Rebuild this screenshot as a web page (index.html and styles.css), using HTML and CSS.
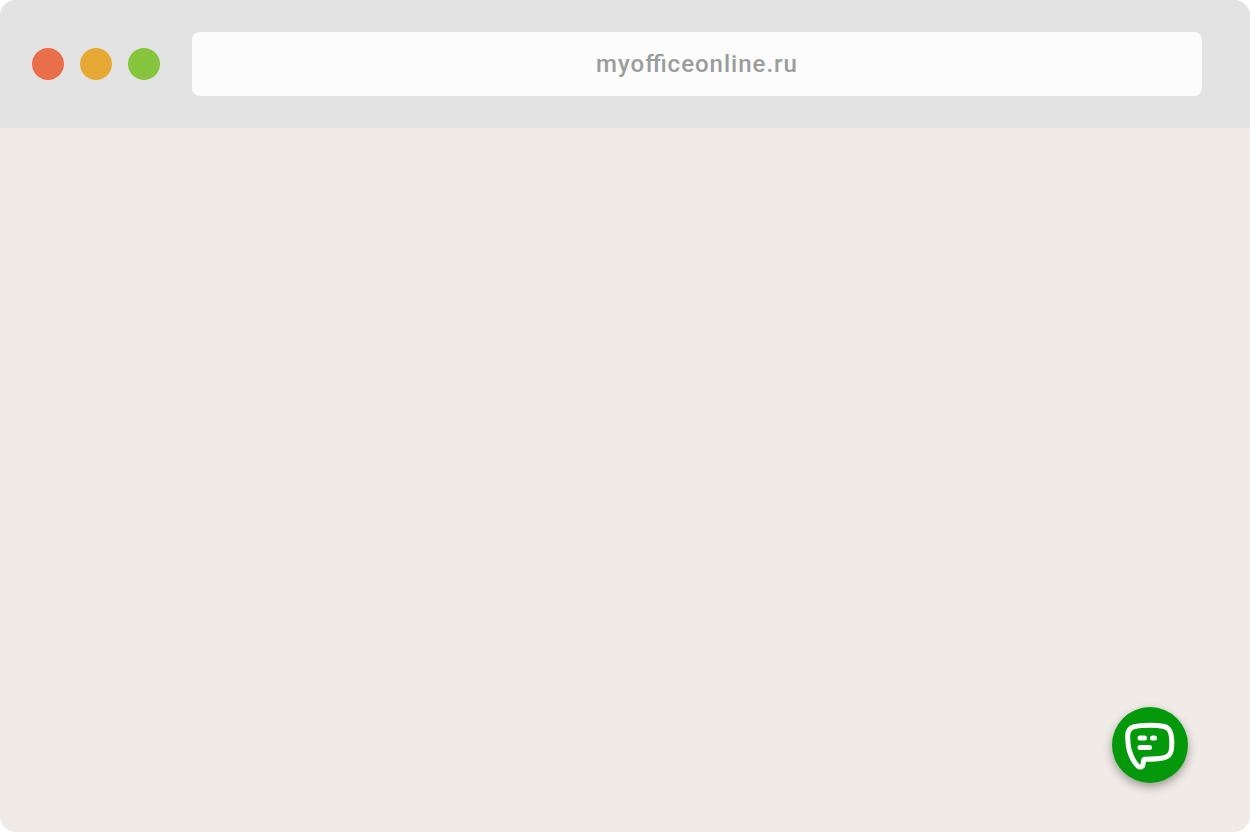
FILE: index.html
```
<!DOCTYPE html>
<html lang="ru">

<head>
    <meta charset="UTF-8">
    <meta name="viewport" content="width=device-width, initial-scale=1.0">
    <title>myofficeonline.ru</title>
    <link rel="stylesheet" href="styles.css">
</head>

<body>
    <div class="browser">
        <header class="toolbar">
            <div class="dots">
                <span class="dot dot-red"></span>
                <span class="dot dot-yellow"></span>
                <span class="dot dot-green"></span>
            </div>
            <input class="address" type="text" value="myofficeonline.ru" aria-label="Адрес" spellcheck="false">
        </header>
        <main class="content">
            <button class="chat" type="button" aria-label="Чат">
                <svg class="chat-icon" viewBox="0 0 76 76" fill="none" stroke="#fff" stroke-linecap="round" stroke-linejoin="round">
                    <path stroke-width="5" d="M38 18.3C31 18.3 26 18.8 22 19.8C17.5 21 15.7 24 15.7 29C15.7 36 16.5 42 18.5 47C20.3 51.7 23 56.5 25.8 59C28.2 61 30.7 60 31 57.5L31.6 53.3C31.8 52.5 32.2 52.2 33 52.2C41 52.2 46 52 51 51C56.5 50 58.8 47 59.4 42.5C60 37.5 60 31.5 58.8 26.5C57.8 22.2 55.5 20 51 19.2C47 18.5 43 18.3 38 18.3Z" />
                    <path stroke-width="5" d="M28 31H32.5M40.5 31H42.5M28 40.5H37.5" />
                </svg>
            </button>
        </main>
    </div>
</body>

</html>
```
FILE: styles.css
```
* {
    margin: 0;
    padding: 0;
    box-sizing: border-box;
}

body {
    background: #ffffff;
    font-family: Roboto, "Liberation Sans", sans-serif;
}

.browser {
    display: flex;
    flex-direction: column;
    min-height: 100vh;
    border-radius: 16px;
    overflow: hidden;
    background: #f0ebe6;
}

/* шапка окна */
.toolbar {
    display: flex;
    align-items: center;
    gap: 32px;
    padding: 32px 48px 32px 32px;
    background: #e3e3e3;
}

.dots {
    display: flex;
    gap: 16px;
}

.dot {
    width: 32px;
    height: 32px;
    border-radius: 50%;
}

.dot-red {
    background: #e96f4c;
}

.dot-yellow {
    background: #e6a935;
}

.dot-green {
    background: #85c43d;
}

.address {
    flex: 1;
    min-width: 0;
    height: 64px;
    border: none;
    border-radius: 8px;
    background: #fcfcfc;
    color: #9b9d9b;
    font-family: inherit;
    font-size: 24px;
    font-weight: 500;
    letter-spacing: 1px;
    font-feature-settings: "liga";
    text-align: center;
}

.content {
    display: flex;
    flex: 1;
    justify-content: flex-end;
    align-items: flex-end;
    padding: 49px 62px;
}

/* кнопка чата */
.chat {
    width: 76px;
    height: 76px;
    border: none;
    border-radius: 50%;
    background: #04990a;
    box-shadow: 0 4px 10px rgba(0, 0, 0, 0.35);
    cursor: pointer;
}

.chat-icon {
    display: block;
    width: 100%;
}
```
